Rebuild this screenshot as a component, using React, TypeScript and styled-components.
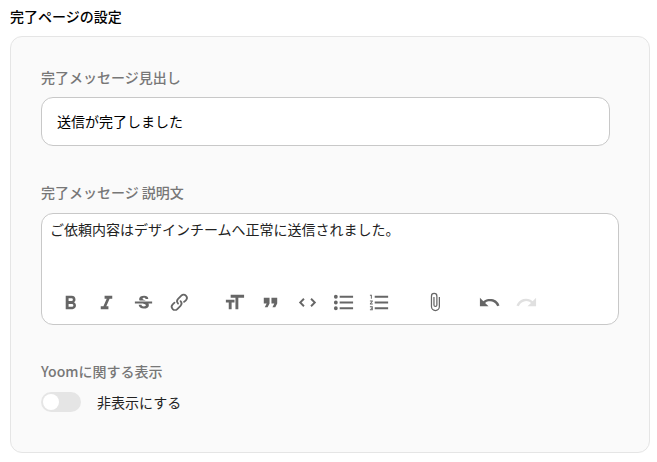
import React from "react";
import styled, { createGlobalStyle } from "styled-components";

const GlobalStyle = createGlobalStyle`
  *, *::before, *::after { box-sizing: border-box; }
  body {
    margin: 0;
    background: #fff;
    color: #000;
    font-family: "Noto Sans CJK JP", "Noto Sans", sans-serif;
    font-size: 14px;
    line-height: 20px;
  }
`;

const Page = styled.main`
  padding: 6px 7px 9px 10px;
`;

const Title = styled.h1`
  margin: 0 0 10px;
  font-size: 14px;
  line-height: 20px;
  font-weight: 500;
`;

const Card = styled.section`
  display: flex;
  flex-direction: column;
  gap: 36px;
  padding: 30px 30px 40px;
  border: 1px solid #e5e5e5;
  border-radius: 12px;
  background: #fafafa;
`;

const Field = styled.div<{ $inset?: boolean }>`
  display: flex;
  flex-direction: column;
  gap: ${(p) => (p.$inset ? "10px" : "11px")};
  padding-right: ${(p) => (p.$inset ? "9px" : "0")};
`;

const Label = styled.label`
  color: #777;
  font-weight: 500;
`;

const GroupLabel = styled.span`
  color: #777;
  font-weight: 500;
`;

const TextInput = styled.input`
  width: 100%;
  height: 49px;
  padding: 0 15px 2px;
  border: 1px solid #c8c8c8;
  border-radius: 12px;
  background: #fff;
  color: #000;
  font: inherit;
  outline: none;
`;

const Editor = styled.div`
  border: 1px solid #c8c8c8;
  border-radius: 12px;
  background: #fff;
`;

const EditorText = styled.textarea`
  display: block;
  width: 100%;
  height: 70px;
  padding: 5px 8px;
  border: 0;
  border-radius: 12px;
  background: transparent;
  color: #222;
  font: inherit;
  resize: none;
  outline: none;
`;

const Toolbar = styled.div`
  display: flex;
  gap: 18px;
  padding: 0 10px 4px;
`;

const ToolGroup = styled.div<{ $width: number }>`
  display: flex;
  width: ${(p) => p.$width}px;
`;

const ToolButton = styled.button`
  display: flex;
  flex: 1;
  align-items: center;
  justify-content: center;
  height: 36px;
  padding: 0;
  border: 0;
  background: transparent;
  color: #666;
  cursor: pointer;

  &:disabled {
    color: #e0e0e0;
    cursor: default;
  }
`;

const ToolIcon = styled.svg<{ $small?: boolean }>`
  flex: none;
  width: ${(p) => (p.$small ? "20px" : "23px")};
  height: ${(p) => (p.$small ? "20px" : "23px")};
  fill: currentColor;
`;

const SwitchRow = styled.label`
  display: flex;
  align-items: center;
  gap: 16px;
  color: #222;
  cursor: pointer;
`;

const Switch = styled.input`
  appearance: none;
  display: flex;
  align-items: center;
  width: 40px;
  height: 20px;
  margin: 0;
  padding: 0 2px;
  border-radius: 10px;
  background: #e5e5e5;
  cursor: pointer;

  &::before {
    content: "";
    width: 16px;
    height: 16px;
    border-radius: 50%;
    background: #fff;
  }

  &:checked {
    justify-content: flex-end;
    background: #666;
  }
`;

interface Tool {
  name: string;
  path: string;
  small?: boolean;
  disabled?: boolean;
}

const toolGroups: { id: string; width: number; tools: Tool[] }[] = [
  {
    id: "text",
    width: 146,
    tools: [
      {
        name: "太字",
        path: "M15.6 11.8c1-.7 1.6-1.8 1.6-2.8a4 4 0 0 0-4-4H7v14h7c2.1 0 3.7-1.7 3.7-3.8 0-1.5-.8-2.8-2.1-3.4zM10 7.5h3a1.5 1.5 0 1 1 0 3h-3v-3zm3.5 9H10v-3h3.5a1.5 1.5 0 1 1 0 3z",
      },
      { name: "斜体", path: "M10 5v3h2.2l-3.4 8H6v3h8v-3h-2.2l3.4-8H18V5h-8z" },
      {
        name: "取り消し線",
        path: "M12.73 5c1.2 0 2.2.3 3 .85s1.25 1.4 1.3 2.45h-2.9c-.08-.75-.65-1.15-1.6-1.15-.9 0-1.5.4-1.5 1 0 .5.4.85 1.2 1.1l2.2.75H7.9c-.3-.45-.45-.95-.45-1.6 0-2.1 2.1-3.4 5.28-3.4zM3 11h18v2h-3.9c.35.5.5 1 .5 1.75 0 2.15-2.05 3.55-5.3 3.55-3.2 0-5.2-1.45-5.35-3.9h2.95c.15 1.05.95 1.65 2.45 1.65 1.3 0 2.1-.45 2.1-1.2 0-.7-.5-1.05-1.65-1.4L11.2 13H3v-2z",
      },
      {
        name: "リンク",
        path: "M9.88 13.7a4.3 4.3 0 0 1 0-6.07l3.37-3.37a4.26 4.26 0 0 1 6.07 0 4.3 4.3 0 0 1 0 6.06l-1.96 1.72a.91.91 0 1 1-1.3-1.3l1.97-1.71a2.46 2.46 0 0 0-3.48-3.48l-3.38 3.37a2.46 2.46 0 0 0 0 3.48.91.91 0 1 1-1.3 1.3zM4.25 19.46a4.3 4.3 0 0 1 0-6.07l1.93-1.9a.91.91 0 1 1 1.3 1.3l-1.93 1.9a2.46 2.46 0 0 0 3.48 3.48l3.37-3.38c.96-.96.96-2.52 0-3.48a.91.91 0 1 1 1.3-1.3 4.3 4.3 0 0 1 0 6.07l-3.38 3.38a4.26 4.26 0 0 1-6.07 0z",
      },
    ],
  },
  {
    id: "block",
    width: 182,
    tools: [
      { name: "見出し", path: "M12 9v3H9v7H6v-7H3V9h9zM8 4h14v3h-6v12h-3V7H8V4z" },
      { name: "引用", path: "M6 17h3l2-4V7H5v6h3zm8 0h3l2-4V7h-6v6h3z" },
      {
        name: "コード",
        path: "M18.2 12L15 15.2l1.4 1.4L21 12l-4.6-4.6L15 8.8l3.2 3.2zM5.8 12L9 8.8 7.6 7.4 3 12l4.6 4.6L9 15.2 5.8 12z",
      },
      {
        name: "箇条書き",
        path: "M4 4a2 2 0 1 0 0 4 2 2 0 0 0 0-4zm0 6a2 2 0 1 0 0 4 2 2 0 0 0 0-4zm0 6a2 2 0 1 0 0 4 2 2 0 0 0 0-4zm4 3h14v-2H8v2zm0-6h14v-2H8v2zm0-8v2h14V5H8z",
      },
      {
        name: "番号付きリスト",
        path: "M2 17h2v.5H3v1h1v.5H2v1h3v-4H2v1zm1-9h1V4H2v1h1v3zm-1 3h1.8L2 13.1v.9h3v-1H3.2L5 10.9V10H2v1zm5-6v2h14V5H7zm0 14h14v-2H7v2zm0-6h14v-2H7v2z",
      },
    ],
  },
  {
    id: "file",
    width: 37,
    tools: [
      {
        name: "ファイルを添付",
        path: "M16.5 6v11.5a4 4 0 1 1-8 0V5a2.5 2.5 0 0 1 5 0v10.5a1 1 0 1 1-2 0V6H10v9.5a2.5 2.5 0 0 0 5 0V5a4 4 0 1 0-8 0v12.5a5.5 5.5 0 0 0 11 0V6h-1.5z",
        small: true,
      },
    ],
  },
  {
    id: "history",
    width: 74,
    tools: [
      {
        name: "元に戻す",
        path: "M12.5 8c-2.6 0-5 1-6.9 2.6L2 7v9h9l-3.6-3.6A8 8 0 0 1 20 16l2.4-.8a10.5 10.5 0 0 0-10-7.2z",
      },
      {
        name: "やり直す",
        path: "M18.4 10.6a10.5 10.5 0 0 0-16.9 4.6L4 16a8 8 0 0 1 12.7-3.6L13 16h9V7l-3.6 3.6z",
        disabled: true,
      },
    ],
  },
];

export default function App() {
  return (
    <>
      <GlobalStyle />
      <Page lang="ja">
        <Title>完了ページの設定</Title>
        <Card>
          <Field $inset>
            <Label htmlFor="heading">完了メッセージ見出し</Label>
            <TextInput id="heading" type="text" defaultValue="送信が完了しました" />
          </Field>
          <Field>
            <Label htmlFor="description">完了メッセージ 説明文</Label>
            <Editor>
              <EditorText
                id="description"
                defaultValue="ご依頼内容はデザインチームへ正常に送信されました。"
              />
              <Toolbar role="toolbar" aria-label="書式">
                {toolGroups.map((group) => (
                  <ToolGroup key={group.id} $width={group.width}>
                    {group.tools.map((tool) => (
                      <ToolButton
                        key={tool.name}
                        type="button"
                        aria-label={tool.name}
                        disabled={tool.disabled}
                      >
                        <ToolIcon $small={tool.small} viewBox="0 0 24 24" aria-hidden="true">
                          <path d={tool.path} />
                        </ToolIcon>
                      </ToolButton>
                    ))}
                  </ToolGroup>
                ))}
              </Toolbar>
            </Editor>
          </Field>
          <Field role="group" aria-labelledby="yoom-label">
            <GroupLabel id="yoom-label">Yoomに関する表示</GroupLabel>
            <SwitchRow>
              <Switch type="checkbox" role="switch" />
              非表示にする
            </SwitchRow>
          </Field>
        </Card>
      </Page>
    </>
  );
}
